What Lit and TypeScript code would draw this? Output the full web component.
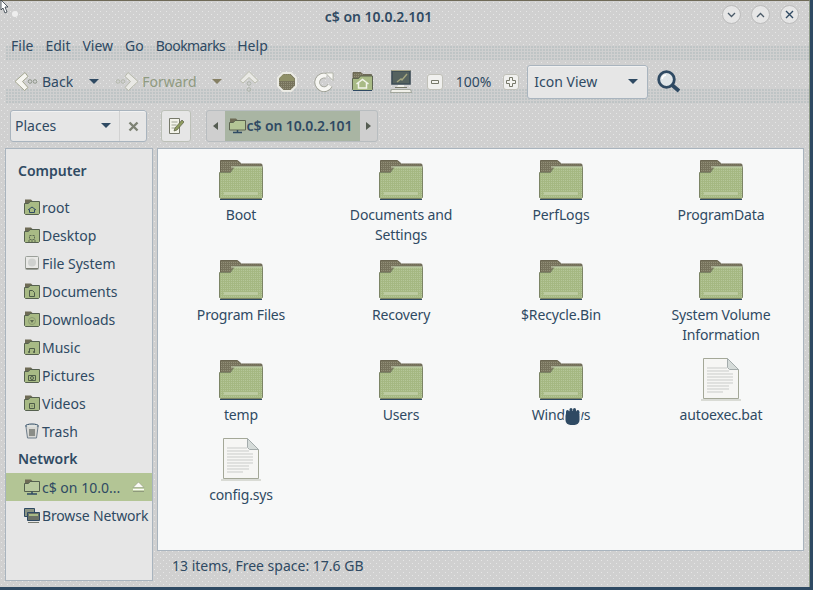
import { LitElement, css, html, svg } from "lit";
import { customElement } from "lit/decorators.js";

const NAVY = "#2f4a63";

// dither used on the green folders, the screenshot is reduced to few colours
const dither = svg`<defs>
  <pattern id="dk" width="2" height="2" patternUnits="userSpaceOnUse"><rect width="2" height="2" fill="#77735c" /><rect width="1" height="1" fill="#918e77" /></pattern>
  <pattern id="gr" width="2" height="2" patternUnits="userSpaceOnUse"><rect width="2" height="2" fill="#a5b882" /><rect width="1" height="1" fill="#b5c699" /></pattern>
</defs>`;

const folderBig = html`<svg width="44" height="40" viewBox="0 0 44 40">
  ${dither}
  <path d="M1.500.500h17l4 3.500h20l.5 1v8H1.500z" fill="url(#dk)" stroke="#6a6550" />
  <path d="M.5 12.500h11l4-6h27.500l.5 1v30l-1 1H1.500l-1-1z" fill="url(#gr)" stroke="#7c8566" />
  <path d="M12 7h31" stroke="#cdd8b8" />
  <path d="M5 32h34v3H5z" fill="#bccba2" />
  <path d="M1 39.500h42" stroke="${NAVY}" />
</svg>`;

const fileBig = html`<svg class="file" width="46" height="43" viewBox="0 0 46 43">
  <path d="M5.500.500h24l11 11v29h-35z" fill="#f6f6f4" stroke="#a4a898" />
  <path d="M29.500.500v9l2 2h9z" fill="#d5dbd9" stroke="#a4acac" />
  <path d="M9 10h20M9 13h22M9 16h26M9 19h26M9 22h26M9 25h26M9 28h22M9 31h22M9 34h16" stroke="#c9cbc9" />
  <path d="M3 42h40" stroke="#d9dbd5" stroke-width="2" />
</svg>`;

const emblems: Record<string, unknown> = {
  home: svg`<path d="M5 11l4-3 4 3M6.500 10.500v3h5v-3" fill="none" stroke="${NAVY}" />`,
  desktop: svg`<path d="M6.500 8.500h5v4h-5zM5 14h8" fill="none" stroke="#5d6b50" stroke-dasharray="2 1" />`,
  docs: svg`<path d="M6.500 13.500v-6h3l2 2v4z" fill="none" stroke="#4e5c48" />`,
  down: svg`<path d="M7 9l2 3 2-3z" fill="#5d6b50" /><circle cx="9" cy="10" r="3.500" fill="none" stroke="#8a9a70" />`,
  music: svg`<path d="M6.500 13.500v-4h5v4" fill="none" stroke="#4e5c48" /><circle cx="6" cy="13" r="1" fill="#4e5c48" /><circle cx="11" cy="13" r="1" fill="#4e5c48" />`,
  photo: svg`<path d="M5.500 8.500h7v5h-7z" fill="none" stroke="#4e5c48" /><circle cx="9" cy="11" r="1.500" fill="none" stroke="#4e5c48" />`,
  video: svg`<path d="M6.500 8.500h5v5h-5z" fill="none" stroke="#4e5c48" /><path d="M8.500 10.500h1v1h-1z" fill="#4e5c48" />`,
};

function folderSmall(emblem: string) {
  return html`<svg width="16" height="16" viewBox="0 0 16 16">
    <path d="M1 .500h6l1.500 1.500h6v2H1z" fill="#6e6b55" />
    <path d="M.5 4.500h4l1.500-2h9.500v12l-1 1h-13l-1-1z" fill="#a8ba85" stroke="#55604f" />
    <g transform="translate(-1 0)">${emblems[emblem]}</g>
  </svg>`;
}

const fileSystem = html`<svg width="16" height="16" viewBox="0 0 16 16">
  <rect x="1.500" y="1.500" width="13" height="13" rx="1" fill="#e9e9e7" stroke="#9ba09a" />
  <circle cx="8" cy="7.500" r="4" fill="#cfd1cf" />
  <path d="M2 13.500h12" stroke="#77796f" />
</svg>`;

const trash = html`<svg width="16" height="16" viewBox="0 0 16 16">
  <ellipse cx="8" cy="3" rx="6.500" ry="2" fill="#dfe2e0" stroke="${NAVY}" />
  <path d="M2 4l1.500 11h9L14 4" fill="#d8d8d5" stroke="#6f7f8c" />
  <path d="M5 6h6v7H5z" fill="#8a8d88" />
</svg>`;

const networkFolder = html`<svg width="16" height="16" viewBox="0 0 16 16">
  <path d="M1 .500h6l1.500 1.500h6v2H1z" fill="#6e6b55" />
  <path d="M.5 4.500h4l1.500-2h9.500v10H.5z" fill="#b9ca9e" stroke="#55604f" />
  <path d="M3 15h10M8 12.500v2" stroke="${NAVY}" stroke-width="1.500" />
</svg>`;

const browse = html`<svg width="16" height="16" viewBox="0 0 16 16">
  <path d="M.5 1.500h10v8H.5z" fill="#8b9483" stroke="${NAVY}" />
  <path d="M3.500 5.500h12v8h-12z" fill="#6b7166" stroke="${NAVY}" />
  <path d="M5 7h9v2H5z" fill="#a8ba85" />
  <path d="M4 15.500h11" stroke="#77796f" />
</svg>`;

const eject = html`<svg width="13" height="12" viewBox="0 0 13 12">
  <path d="M6.500 1L12 6.500H1z" fill="#fbfbf7" stroke="#8f9a7c" stroke-width=".6" />
  <path d="M1 8.500h11" stroke="#fbfbf7" stroke-width="1.500" />
  <path d="M1 10.500h11" stroke="#8f9a7c" />
</svg>`;

const backIcon = html`<svg width="24" height="20" viewBox="0 0 24 20">
  <path d="M11 .500L1 9.500l9.500 9 3.500-3-5.500-6 5.500-5z" fill="#f5f5f0" stroke="#a3a58f" />
  <circle cx="16" cy="9.500" r="1.800" fill="none" stroke="#8e968a" />
  <circle cx="21" cy="9.500" r="1.800" fill="none" stroke="#8e968a" />
</svg>`;

const forwardIcon = html`<svg width="24" height="20" viewBox="0 0 24 20">
  <path d="M13 .500l10 9-9.500 9-3.500-3 5.500-6-5.500-5z" fill="#e9e9e5" stroke="#b7b9ab" />
  <circle cx="8" cy="9.500" r="1.800" fill="none" stroke="#b4b8ac" />
  <circle cx="3" cy="9.500" r="1.800" fill="none" stroke="#b4b8ac" />
</svg>`;

const upIcon = html`<svg width="20" height="22" viewBox="0 0 20 22">
  <path d="M10 .500l9 9-3 2.500-6-5.500L4 12 1 9.500z" fill="#e9e9e5" stroke="#bcbeb0" />
  <circle cx="10" cy="12.500" r="1.800" fill="none" stroke="#aeb4aa" />
  <circle cx="10" cy="18.500" r="1.800" fill="none" stroke="#aeb4aa" />
</svg>`;

const stopIcon = html`<svg width="20" height="20" viewBox="0 0 20 20">
  ${dither}
  <path d="M6 1h8l5 5v8l-5 5H6l-5-5V6z" fill="url(#dk)" stroke="#ebebe5" stroke-width="2" />
  <path d="M6 2.500h7l4.500 4.500v2H2.500V6z" fill="#8f9068" />
</svg>`;

const reloadIcon = html`<svg width="20" height="20" viewBox="0 0 20 20">
  <path d="M16 13.500A6.800 6.800 0 1 1 12.500 4" fill="none" stroke="#9a9c90" stroke-width="5.500" />
  <path d="M16 13.500A6.800 6.800 0 1 1 12.500 4" fill="none" stroke="#f6f6f2" stroke-width="4" />
  <path d="M11.500 1H19v7.500z" fill="#f6f6f2" stroke="#a5a79a" stroke-width=".7" />
</svg>`;

const homeIcon = html`<svg width="21" height="19" viewBox="0 0 21 19">
  ${dither}
  <path d="M1 .500h8l2 2h8.500v4H1z" fill="url(#dk)" stroke="#5f5b48" stroke-width=".8" />
  <path d="M.5 6.500h6l2-2.500h12v13.500l-1 1H1.500l-1-1z" fill="#a8ba85" stroke="#5d6450" />
  <path d="M4.500 12l6-4.500 6 4.500M6.500 11v5h8v-5" fill="none" stroke="#f2f4ea" stroke-width="1.500" />
  <path d="M1 18.500h19" stroke="${NAVY}" />
</svg>`;

const computerIcon = html`<svg width="22" height="23" viewBox="0 0 22 23">
  <path d="M2 1h18v13H2z" fill="#55625f" stroke="#3c4c56" stroke-width="1.600" />
  <path d="M1.500.500h19" stroke="#a5a387" />
  <path d="M7 12l4-3 1 1 5-6" fill="none" stroke="#a3a57f" stroke-width="1.500" />
  <path d="M8 15h6v2H8z" fill="#f0f0ea" />
  <path d="M5 17.500h12" stroke="#77796a" />
  <path d="M1.500 19.500h19l1 3H.5z" fill="#f0f0ea" stroke="#8b8f82" stroke-width=".7" />
</svg>`;

const searchIcon = html`<svg width="24" height="23" viewBox="0 0 24 23">
  <circle cx="9.500" cy="9.500" r="7.800" fill="#dfe5e8" stroke="${NAVY}" stroke-width="2.800" />
  <path d="M15 15l7 6" stroke="${NAVY}" stroke-width="3.800" />
  <path d="M5 9a5 5 0 0 1 4-4" stroke="#fff" fill="none" stroke-width="1.500" />
</svg>`;

const editIcon = html`<svg width="16" height="18" viewBox="0 0 16 18">
  <path d="M1.500 1.500h10v15h-10z" fill="#f3f3ea" stroke="#77796a" />
  <path d="M3.500 5h6M3.500 8h5M3.500 11h4" stroke="#9fa394" />
  <path d="M14 3l2 2-7 8-3 1 1-3z" fill="#8f9c5f" stroke="#5a5f45" stroke-width=".7" />
</svg>`;

const pathFolder = html`<svg width="17" height="17" viewBox="0 0 17 17">
  <path d="M1 1.500h6l1.500 1.500h7v2H1z" fill="#6e6b55" />
  <path d="M.5 5.500h4l1.500-2h10.500v9.500H.5z" fill="#b3c595" stroke="#5d6450" />
  <path d="M4 15.500h9M8.500 13v2" stroke="${NAVY}" stroke-width="1.500" />
</svg>`;

const caret = html`<svg class="caret" width="10" height="5" viewBox="0 0 10 5"><path d="M0 0h10L5 5z" /></svg>`;

const places: [unknown, string][] = [
  [folderSmall("home"), "root"],
  [folderSmall("desktop"), "Desktop"],
  [fileSystem, "File System"],
  [folderSmall("docs"), "Documents"],
  [folderSmall("down"), "Downloads"],
  [folderSmall("music"), "Music"],
  [folderSmall("photo"), "Pictures"],
  [folderSmall("video"), "Videos"],
  [trash, "Trash"],
];

const files: [string, boolean][] = [
  ["Boot", true],
  ["Documents and Settings", true],
  ["PerfLogs", true],
  ["ProgramData", true],
  ["Program Files", true],
  ["Recovery", true],
  ["$Recycle.Bin", true],
  ["System Volume Information", true],
  ["temp", true],
  ["Users", true],
  ["Windows", true],
  ["autoexec.bat", false],
  ["config.sys", false],
];

@customElement("app-root")
export class AppRoot extends LitElement {
  static styles = css`
    :host {
      display: block;
      width: 813px;
      height: 590px;
      overflow: hidden;
      position: relative;
      background: #2f4a63;
      font-family: "Noto Sans", sans-serif;
      font-size: 14px;
      color: #2f4a63;
    }
    svg {
      display: block;
      flex: none;
    }
    .window {
      box-sizing: border-box;
      width: 810px;
      height: 587px;
      border-top: 1px solid #6f6a58;
      border-right: 1px solid #8d9a88;
      display: flex;
      flex-direction: column;
      background-color: #d0d0d0;
      background-image:
        radial-gradient(circle at 1.500px 1.500px, #e6e6e6 0.9px, transparent 1px),
        radial-gradient(circle at 4.500px 4.500px, #e6e6e6 0.9px, transparent 1px);
      background-size: 6px 6px;
    }
    .titlebar {
      height: 30px;
      flex: none;
      display: flex;
      align-items: center;
      justify-content: center;
      position: relative;
      font-weight: 600;
      padding-right: 52px;
      box-sizing: border-box;
    }
    .controls {
      position: absolute;
      right: 10px;
      top: 4px;
      display: flex;
      gap: 10px;
    }
    .ctl {
      width: 17px;
      height: 17px;
      border-radius: 50%;
      background: #e6e6e6;
      border: 1px solid #bcbcbc;
      display: flex;
      align-items: center;
      justify-content: center;
    }
    .stipple {
      position: relative;
      isolation: isolate;
    }
    .stipple::after {
      content: "";
      position: absolute;
      z-index: -1;
      left: 6px;
      right: 0;
      bottom: 0;
      height: 14px;
      background-image: radial-gradient(circle at 1px 1px, #bec4c5 0.7px, transparent 0.9px);
      background-size: 3px 3px;
    }
    .menubar {
      height: 29px;
      flex: none;
      display: flex;
      align-items: center;
      gap: 12px;
      padding: 0 11px;
      box-sizing: border-box;
    }
    .tight {
      letter-spacing: -0.55px;
    }
    .tight-soft {
      letter-spacing: -0.15px;
    }
    .toolbar {
      height: 43px;
      flex: none;
      display: flex;
      align-items: center;
      padding-left: 14px;
      box-sizing: border-box;
    }
    .nav {
      display: flex;
      align-items: center;
    }
    .caret {
      fill: #2f4a63;
    }
    .off {
      color: #8f9a80;
    }
    .off .caret {
      fill: #857f63;
    }
    .gap-15 { margin-left: 15px; }
    .gap-16 { margin-left: 16px; }
    .gap-17 { margin-left: 17px; }
    .gap-18 { margin-left: 18px; }
    .gap-12 { margin-left: 12px; }
    .gap-13 { margin-left: 13px; }
    .gap-9 { margin-left: 9px; }
    .gap-4 { margin-left: 4px; }
    .gap-3 { margin-left: 3px; }
    .zoom-btn {
      box-sizing: border-box;
      width: 16px;
      height: 16px;
      border: 1px solid #c0c0b8;
      border-radius: 3px;
      background: #f0f0ee;
      display: flex;
      align-items: center;
      justify-content: center;
    }
    .combo {
      box-sizing: border-box;
      display: flex;
      align-items: center;
      justify-content: space-between;
      background: #e6e6e6;
      border: 1px solid #a9b4be;
      border-radius: 3px;
      box-shadow: inset 0 1px 0 #f2f2f2;
    }
    .view-combo {
      width: 121px;
      height: 34px;
      padding: 0 9px 0 6px;
      margin-left: 8px;
    }
    .pathbar {
      height: 45px;
      flex: none;
      display: flex;
      align-items: flex-start;
      padding: 7px 0 0 10px;
      box-sizing: border-box;
    }
    .places-combo {
      width: 137px;
      height: 32px;
      padding-left: 4px;
    }
    .places-label {
      flex: 1;
      display: flex;
      align-items: center;
      justify-content: space-between;
      padding-right: 8px;
      padding-bottom: 2px;
    }
    .places-close {
      width: 26px;
      height: 100%;
      border-left: 1px solid #d2d2d2;
      display: flex;
      align-items: center;
      justify-content: center;
    }
    .edit {
      box-sizing: border-box;
      width: 30px;
      height: 32px;
      margin-left: 14px;
      background: #e6e6e6;
      border: 1px solid #bcc0b8;
      border-radius: 3px;
      display: flex;
      align-items: center;
      justify-content: center;
    }
    .crumbs {
      box-sizing: border-box;
      width: 172px;
      height: 32px;
      margin-left: 15px;
      display: flex;
      border: 1px solid #b8bdc0;
      border-radius: 3px;
      background: #cfcfcf;
    }
    .crumb-arrow {
      flex: 1;
      display: flex;
      align-items: center;
      justify-content: center;
    }
    .crumb {
      width: 135px;
      flex: none;
      background: #a9b5a3;
      display: flex;
      align-items: center;
      gap: 1px;
      padding-left: 4px;
      padding-bottom: 1px;
      box-sizing: border-box;
      font-weight: 600;
      letter-spacing: -0.1px;
      white-space: nowrap;
    }
    .body {
      flex: 1;
      min-height: 0;
      display: flex;
      padding: 0 5px;
      gap: 4px;
    }
    .sidebar {
      box-sizing: border-box;
      width: 148px;
      height: 433px;
      background: #e6e6e6;
      border: 1px solid #a9b4be;
      padding-top: 8px;
      white-space: nowrap;
    }
    .heading {
      height: 28px;
      line-height: 28px;
      padding-left: 12px;
      font-weight: 600;
    }
    .heading.first {
      margin-bottom: 8px;
    }
    .row {
      height: 28px;
      display: flex;
      align-items: center;
      gap: 2px;
      padding-left: 18px;
      position: relative;
    }
    .row.selected {
      background: #b3c595;
    }
    .row .eject {
      position: absolute;
      right: 7px;
      top: 8px;
    }
    .main {
      flex: 1;
      min-width: 0;
      display: flex;
      flex-direction: column;
    }
    .content {
      box-sizing: border-box;
      height: 403px;
      background: #f7f8f8;
      border: 1px solid #a9b4be;
      padding: 5px 3px 0;
      display: grid;
      grid-template-columns: repeat(4, 160px);
      align-content: start;
    }
    .item {
      display: flex;
      flex-direction: column;
      align-items: center;
      text-align: center;
      line-height: 20px;
    }
    .thumb {
      height: 46px;
      display: flex;
      align-items: flex-end;
      margin-bottom: 5px;
    }
    .file {
      margin-bottom: -1px;
    }
    .name {
      width: 122px;
      padding-bottom: 9px;
      letter-spacing: -0.15px;
    }
    .status {
      height: 30px;
      line-height: 30px;
      padding-left: 15px;
    }
    .pointer {
      position: absolute;
      left: 0;
      top: 0;
    }
    .dot {
      position: absolute;
      left: 12px;
      top: 11px;
      width: 6px;
      height: 6px;
      border-radius: 50%;
      background: #eeeeee;
    }
    .hand {
      position: absolute;
      left: 563px;
      top: 406px;
    }
  `;

  render() {
    return html`
      <div class="window">
        <div class="titlebar">
          <span>c$ on 10.0.2.101</span>
          <div class="controls">
            <div class="ctl">
              <svg width="9" height="6" viewBox="0 0 9 6"><path d="M1 1l3.500 3.500L8 1" fill="none" stroke="#4a5a68" stroke-width="1.300" /></svg>
            </div>
            <div class="ctl">
              <svg width="9" height="6" viewBox="0 0 9 6"><path d="M1 5l3.500-3.500L8 5" fill="none" stroke="#4a5a68" stroke-width="1.300" /></svg>
            </div>
            <div class="ctl">
              <svg width="9" height="9" viewBox="0 0 9 9"><path d="M1 1l7 7M8 1L1 8" stroke="#2f4a63" stroke-width="1.400" /></svg>
            </div>
          </div>
        </div>
        <div class="menubar stipple">
          <span>File</span><span>Edit</span><span>View</span><span>Go</span><span class="tight">Bookmarks</span><span>Help</span>
        </div>
        <div class="toolbar stipple">
          <div class="nav">
            ${backIcon}
            <span class="gap-4">Back</span>
            <span class="gap-16">${caret}</span>
          </div>
          <div class="nav off gap-16">
            ${forwardIcon}
            <span class="gap-3">Forward</span>
            <span class="gap-15">${caret}</span>
          </div>
          <span class="gap-17">${upIcon}</span>
          <span class="gap-18">${stopIcon}</span>
          <span class="gap-17">${reloadIcon}</span>
          <span class="gap-18">${homeIcon}</span>
          <span class="gap-17">${computerIcon}</span>
          <div class="zoom-btn gap-15">
            <svg width="8" height="4" viewBox="0 0 8 4"><path d="M.5.500h7v3h-7z" fill="#f4f4f0" stroke="#77796a" /></svg>
          </div>
          <span class="gap-13">100%</span>
          <div class="zoom-btn gap-12">
            <svg width="10" height="10" viewBox="0 0 10 10"><path d="M3.500.500h3v3h3v3h-3v3h-3v-3h-3v-3h3z" fill="#f4f4f0" stroke="#77796a" /></svg>
          </div>
          <div class="combo view-combo"><span>Icon View</span>${caret}</div>
          <span class="gap-9">${searchIcon}</span>
        </div>
        <div class="pathbar">
          <div class="combo places-combo">
            <div class="places-label"><span>Places</span>${caret}</div>
            <div class="places-close">
              <svg width="11" height="11" viewBox="0 0 11 11"><path d="M1.500 1.500l8 8M9.500 1.500l-8 8" stroke="#7d8274" stroke-width="2.400" /></svg>
            </div>
          </div>
          <div class="edit">${editIcon}</div>
          <div class="crumbs">
            <div class="crumb-arrow">
              <svg width="5" height="8" viewBox="0 0 5 8"><path d="M5 0v8L0 4z" fill="#555d52" /></svg>
            </div>
            <div class="crumb">${pathFolder}<span>c$ on 10.0.2.101</span></div>
            <div class="crumb-arrow">
              <svg width="5" height="8" viewBox="0 0 5 8"><path d="M0 0v8l5-4z" fill="#555d52" /></svg>
            </div>
          </div>
        </div>
        <div class="body">
          <nav class="sidebar">
            <div class="heading first">Computer</div>
            ${places.map(([icon, label]) => html`<div class="row">${icon}<span>${label}</span></div>`)}
            <div class="heading">Network</div>
            <div class="row selected">${networkFolder}<span>c$ on 10.0...</span><span class="eject">${eject}</span></div>
            <div class="row">${browse}<span class="tight-soft">Browse Network</span></div>
          </nav>
          <div class="main">
            <section class="content">
              ${files.map(
                ([name, isFolder]) => html`<div class="item">
                  <div class="thumb">${isFolder ? folderBig : fileBig}</div>
                  <div class="name">${name}</div>
                </div>`,
              )}
            </section>
            <div class="status">13 items, Free space: 17.6 GB</div>
          </div>
        </div>
      </div>
      <svg class="pointer" width="10" height="14" viewBox="0 0 10 14"><path d="M1 0l7 7H5l2 5-2 1-2-5-2 2z" fill="#fff" stroke="#2f3a44" stroke-width=".8" /></svg>
      <div class="dot"></div>
      <svg class="hand" width="19" height="21" viewBox="0 0 19 21">
        <ellipse cx="9.500" cy="12" rx="9" ry="9" fill="#f4f4f4" />
        <rect x="2.500" y="5" width="14" height="14" rx="5" fill="#2f4a63" />
        <rect x="3" y="4" width="3" height="6" rx="1.500" fill="#2f4a63" />
        <rect x="6.500" y="2" width="3" height="6" rx="1.500" fill="#2f4a63" />
        <rect x="10" y="2" width="3" height="6" rx="1.500" fill="#2f4a63" />
        <rect x="13.300" y="4" width="3" height="6" rx="1.500" fill="#2f4a63" />
      </svg>
    `;
  }
}
